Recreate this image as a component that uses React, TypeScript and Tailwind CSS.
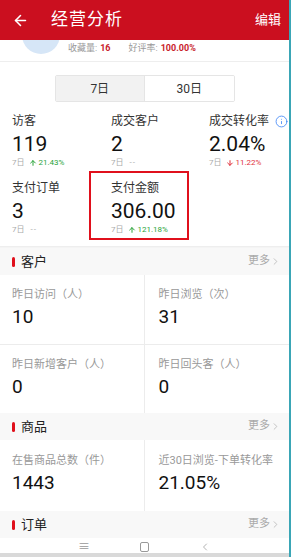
import { ArrowLeft, ArrowDown, ArrowUp, ChevronLeft, ChevronRight, Info } from "lucide-react";

const font = { fontFamily: '"Roboto", "Noto Sans CJK SC", sans-serif' };

type Stat = { label: string; value: string; trend?: "up" | "down"; pct?: string; boxed?: boolean; info?: boolean };

const stats: Stat[] = [
  { label: "访客", value: "119", trend: "up", pct: "21.43%" },
  { label: "成交客户", value: "2" },
  { label: "成交转化率", value: "2.04%", trend: "down", pct: "11.22%", info: true },
  { label: "支付订单", value: "3" },
  { label: "支付金额", value: "306.00", trend: "up", pct: "121.18%", boxed: true },
];

function StatCell({ s }: { s: Stat }) {
  return (
    <div
      className={
        s.boxed
          ? "-ml-[22px] -mt-[9px] w-[100px] border-2 border-[#e0101c] pl-[20px] pt-[7px] pb-[3px]"
          : "whitespace-nowrap"
      }
    >
      <div className="flex items-center whitespace-nowrap text-[12px] leading-[16px] text-[#333]">
        {s.label}
        {s.info && <Info className="ml-[6px] h-[13px] w-[13px] text-[#3b82f6]" strokeWidth={1.5} />}
      </div>
      <div className="mt-[3px] text-[21px] leading-[24px] text-[#111]">{s.value}</div>
      <div className="mt-[2px] flex items-center text-[8px] leading-[10px] text-[#aaa]">
        <span>7日</span>
        {s.trend === "up" && (
          <span className="ml-[4px] flex items-center text-[#2aa43a]">
            <ArrowUp className="h-[8px] w-[8px]" strokeWidth={3} />
            <span className="ml-[2px]">{s.pct}</span>
          </span>
        )}
        {s.trend === "down" && (
          <span className="ml-[4px] flex items-center text-[#e0313c]">
            <ArrowDown className="h-[8px] w-[8px]" strokeWidth={3} />
            <span className="ml-[2px]">{s.pct}</span>
          </span>
        )}
        {!s.trend && <span className="ml-[6px] tracking-[1px]">--</span>}
      </div>
    </div>
  );
}

function SectionHead({ title }: { title: string }) {
  return (
    <div className="flex h-[27px] shrink-0 items-center justify-between bg-[#f8f8f8] pl-[12px] pr-[8px]">
      <div className="flex items-center text-[13px] text-[#222]">
        <span className="mr-[6px] h-[10px] w-[3px] rounded-sm bg-[#e0101c]" />
        {title}
      </div>
      <div className="flex items-center text-[11px] text-[#aaa]">
        更多
        <ChevronRight className="h-[11px] w-[11px]" strokeWidth={1.5} />
      </div>
    </div>
  );
}

function Cell({ label, value, left }: { label: string; value: string; left?: boolean }) {
  return (
    <div className={`flex flex-col justify-center pb-[3px] ${left ? "border-r border-[#ececec] pl-[12px]" : "pl-[14px]"}`}>
      <div className="whitespace-nowrap text-[11px] leading-[14px] text-[#999]">{label}</div>
      <div className="mt-[4px] text-[19px] leading-[22px] text-[#111]">{value}</div>
    </div>
  );
}

export default function App() {
  return (
    <div className="flex h-[557px] w-[291px] flex-col overflow-hidden border-r-2 border-[#3aa6b6] bg-white" style={font}>
      <div className="relative z-10 flex h-[40px] shrink-0 items-center bg-[#cb0f1f] text-white">
        <ArrowLeft className="ml-[12px] h-[17px] w-[17px]" strokeWidth={2.2} />
        <span className="ml-[22px] text-[17px] tracking-[1px]">经营分析</span>
        <span className="ml-auto mr-[8px] text-[13px]">编辑</span>
      </div>

      <div className="relative flex h-[22px] shrink-0 items-start border-b border-[#eee]">
        <div className="absolute left-[22px] -top-[24px] h-[38px] w-[38px] rounded-full bg-[#d6e6f7]" />
        <div className="ml-[68px] mt-[2px] flex items-center text-[9px] text-[#999]">
          收藏量: <span className="ml-[3px] font-bold text-[#c81d2c]">16</span>
          <span className="ml-[18px]">好评率:</span>
          <span className="ml-[3px] font-bold text-[#c81d2c]">100.00%</span>
        </div>
      </div>

      <div className="flex shrink-0 justify-center pt-[13px]">
        <div className="flex h-[27px] w-[180px] overflow-hidden rounded-[2px] border border-[#e5e5e5] text-[12px] text-[#333]">
          <div className="flex flex-1 items-center justify-center border-r border-[#e5e5e5] bg-[#f2f2f2]">7日</div>
          <div className="flex flex-1 items-center justify-center bg-white">30日</div>
        </div>
      </div>

      <div className="grid shrink-0 grid-cols-[99px_98px_1fr] gap-y-[12px] pl-[12px] pt-[11px] pb-[6px]">
        {stats.map((s) => (
          <StatCell key={s.label} s={s} />
        ))}
      </div>

      <div className="h-[2px] shrink-0 border-t border-[#eee] bg-[#f4f4f4]" />

      <SectionHead title="客户" />
      <div className="grid shrink-0 grid-cols-2 grid-rows-[69px_69px]">
        <Cell label="昨日访问（人）" value="10" left />
        <Cell label="昨日浏览（次）" value="31" />
        <div className="col-span-2 grid grid-cols-2 border-t border-[#ececec]">
          <Cell label="昨日新增客户（人）" value="0" left />
          <Cell label="昨日回头客（人）" value="0" />
        </div>
      </div>

      <SectionHead title="商品" />
      <div className="grid h-[71px] shrink-0 grid-cols-2">
        <Cell label="在售商品总数（件）" value="1443" left />
        <Cell label="近30日浏览-下单转化率" value="21.05%" />
      </div>

      <SectionHead title="订单" />

      <div className="relative flex flex-1 items-start justify-center gap-[50px] bg-white pt-[3px] text-[#999]">
        <span className="text-[12px] leading-[12px]">≡</span>
        <span className="mt-[1px] h-[10px] w-[9px] rounded-[2px] border border-[#999]" />
        <ChevronLeft className="h-[12px] w-[12px]" strokeWidth={1.5} />
        <div className="absolute bottom-0 left-0 right-0 h-[4px] bg-[#d9d9d9]" />
      </div>
    </div>
  );
}
